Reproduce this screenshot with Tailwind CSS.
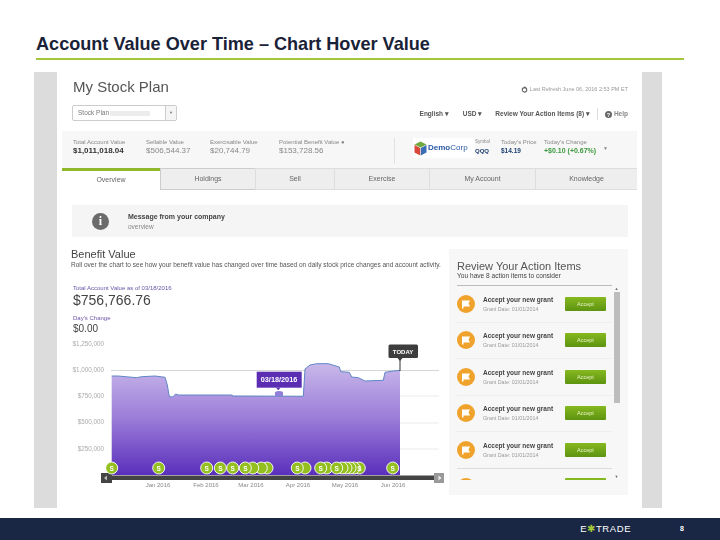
<!DOCTYPE html>
<html lang="en">
<head>
    <meta charset="UTF-8">
    <title>Account Value Over Time</title>
    <script src="https://cdn.jsdelivr.net/npm/@tailwindcss/browser@4"></script>
</head>
<body class="w-[720px] h-[540px] overflow-hidden bg-white font-['Liberation_Sans',Arial,sans-serif] flex flex-col">

    <!-- Slide title -->
    <header class="h-[72px] pl-[36px] pr-[36px] pt-[34px] shrink-0">
        <h1 class="text-[18.100px] leading-[20px] font-bold text-[#1a2238] h-[24px] whitespace-nowrap">Account Value Over Time – Chart Hover Value</h1>
        <div class="h-[2px] bg-[#a4c639]"></div>
    </header>

    <!-- Screenshot of the stock plan page -->
    <main class="ml-[34px] w-[628px] h-[436px] shrink-0 bg-[#dcdcdc] px-[23px] pr-[20px]">
        <div class="w-[585px] h-full bg-white overflow-hidden blur-[0.5px]">

            <div class="h-[33px] flex justify-between pl-[16px] pr-[14px] pt-[5px]">
                <h2 class="text-[15px] leading-[20px] text-[#555]">My Stock Plan</h2>
                <div class="flex items-center gap-[2px] h-[24px] text-[5.500px] text-[#999]">
                    <svg width="7" height="7" viewBox="0 0 10 10"><circle cx="5" cy="5.500" r="3.200" fill="none" stroke="#666" stroke-width="1.600"/><path d="M5 0l2.500 2.200L5 3.600z" fill="#666"/></svg>
                    <span>Last Refresh June 06, 2016 2:53 PM ET</span>
                </div>
            </div>

            <div class="h-[26px] flex justify-between items-start pl-[15px] pr-[14px]">
                <div class="w-[105px] h-[16px] border border-[#ccc] rounded-[2px] flex text-[6.500px] text-[#777] items-center">
                    <span class="pl-[5px] flex-1 flex items-center gap-[1px]">Stock Plan <span class="w-[40px] h-[5px] bg-[#ececec]"></span></span>
                    <span class="w-[11px] h-full border-l border-[#ccc] bg-[#f5f5f5] flex items-center justify-center text-[4px]">▼</span>
                </div>
                <div class="flex items-center text-[6.500px] text-[#555] h-[18px] font-bold">
                    <span class="mr-[14px]">English ▾</span>
                    <span class="mr-[13px]">USD ▾</span>
                    <span class="pr-[7px] border-r border-[#ddd] h-[12px] leading-[12px] mr-[7px]">Review Your Action Items (8) ▾</span>
                    <svg width="7" height="7" viewBox="0 0 10 10" class="mr-[2px]"><circle cx="5" cy="5" r="5" fill="#666"/><text x="5" y="8" font-size="8" fill="#fff" text-anchor="middle">?</text></svg>
                    <span class="text-[#888]">Help</span>
                </div>
            </div>

            <!-- Summary band -->
            <div class="ml-[5px] w-[575px] h-[37px] bg-[#f7f7f7] flex pl-[11px] pt-[7px] text-[#888]">
                <div class="w-[73px]"><p class="text-[6px] leading-[8px]">Total Account Value</p><p class="text-[8px] leading-[10px] font-bold text-[#333]">$1,011,018.04</p></div>
                <div class="w-[64px]"><p class="text-[6px] leading-[8px]">Sellable Value</p><p class="text-[8px] leading-[10px]">$506,544.37</p></div>
                <div class="w-[69px]"><p class="text-[6px] leading-[8px]">Exercisable Value</p><p class="text-[8px] leading-[10px]">$20,744.79</p></div>
                <div class="w-[116px] border-r border-[#e2e2e2] h-[26px]"><p class="text-[6px] leading-[8px] whitespace-nowrap">Potential Benefit Value ●</p><p class="text-[8px] leading-[10px]">$153,728.56</p></div>
                <div class="w-[18px]"></div>
                <div class="w-[62px] h-[20px] bg-white flex items-center gap-[1px] pl-[1px]">
                    <svg width="13" height="15" viewBox="0 0 13 15"><path d="M6.500 0.500L12.500 3.500L6.500 6.500L0.500 3.500z" fill="#6fa83c"/><path d="M0.500 4L6.200 7V14.500L0.500 11.500z" fill="#d9483b"/><path d="M12.500 4L6.800 7V14.500L12.500 11.500z" fill="#3a6fb5"/></svg>
                    <span class="text-[8px] font-bold text-[#2a5aa8]">Demo<span class="font-normal">Corp</span></span>
                </div>
                <div class="w-[26px]"><p class="text-[4.500px] leading-[8px]">Symbol</p><p class="text-[6px] leading-[10px] font-bold text-[#1d3f72]">QQQ</p></div>
                <div class="w-[43px]"><p class="text-[6px] leading-[8px]">Today's Price</p><p class="text-[6.500px] leading-[10px] font-bold text-[#1d3f72]">$14.19</p></div>
                <div class="w-[59px]"><p class="text-[6px] leading-[8px]">Today's Change</p><p class="text-[7px] leading-[10px] font-bold text-[#3c9a3c] whitespace-nowrap">+$0.10 (+0.67%)</p></div>
                <span class="text-[5px] leading-[20px]">▼</span>
            </div>

            <!-- Tabs -->
            <nav class="ml-[5px] w-[575px] h-[22px] flex text-[7px] text-[#666] text-center">
                <div class="w-[98px] border-t-[3px] border-[#8fb82b] leading-[17px] bg-white">Overview</div>
                <div class="w-[95px] border-t border-b border-l border-[#ccc] bg-[#eee] leading-[20px]">Holdings</div>
                <div class="w-[79px] border-t border-b border-l border-[#ddd] bg-[#eee] leading-[20px]">Sell</div>
                <div class="w-[95px] border-t border-b border-l border-[#ddd] bg-[#eee] leading-[20px]">Exercise</div>
                <div class="w-[106px] border-t border-b border-l border-[#ddd] bg-[#eee] leading-[20px]">My Account</div>
                <div class="w-[102px] border-t border-b border-l border-[#ddd] bg-[#eee] leading-[20px]">Knowledge</div>
            </nav>

            <!-- Company message -->
            <div class="ml-[15px] mt-[15px] w-[556px] h-[32px] bg-[#f5f5f5] flex items-center">
                <div class="ml-[20px] w-[17px] h-[17px] rounded-full bg-[#6b6b6b] text-white text-[12px] leading-[17px] text-center font-bold font-['Liberation_Serif',serif]">i</div>
                <div class="ml-[19px]">
                    <p class="text-[7px] leading-[11px] font-bold text-[#444]">Message from your company</p>
                    <p class="text-[6.500px] leading-[9px] text-[#888]">overview</p>
                </div>
            </div>

            <div class="flex mt-[12px]">
                <!-- Benefit value chart -->
                <section class="w-[392px] h-[246px] shrink-0">
                    <div class="pl-[14px]">
                        <h3 class="text-[11px] leading-[12px] text-[#444] mt-[-1px]">Benefit Value</h3>
                    </div>
                    <p class="pl-[14px] mt-[1px] text-[6.500px] leading-[8px] text-[#555] whitespace-nowrap w-[392px]">Roll over the chart to see how your benefit value has changed over time based on daily stock price changes and account activity.</p>
                    <div class="pl-[16px] pt-[16px]">
                        <p class="text-[6px] leading-[7px] text-[#6a55a8]">Total Account Value as of 03/18/2016</p>
                        <p class="text-[14px] leading-[17px] text-[#444]">$756,766.76</p>
                        <p class="text-[6px] leading-[8px] mt-[5px] text-[#6a55a8]">Day's Change</p>
                        <p class="text-[10px] leading-[12px] mt-[1px] text-[#444]">$0.00</p>
                    </div>
                    <svg class="block ml-[3px]" width="389" height="156" viewBox="60 335 389 156" font-family="Liberation Sans, sans-serif">
                        <defs>
                            <linearGradient id="area" x1="0" y1="0" x2="0" y2="1">
                                <stop offset="0" stop-color="#c9b8ea"/>
                                <stop offset="0.5" stop-color="#9a7bd8"/>
                                <stop offset="1" stop-color="#5a2fbc"/>
                            </linearGradient>
                        </defs>
                        <g stroke="#e6e6e6" stroke-width="0.800">
                            <line x1="111" y1="370.500" x2="439" y2="370.500" stroke="#ccc"/>
                            <line x1="111" y1="396" x2="439" y2="396"/>
                            <line x1="111" y1="423" x2="439" y2="423"/>
                            <line x1="111" y1="449" x2="439" y2="449"/>
                        </g>
                        <g font-size="6.300" fill="#aaa" text-anchor="end">
                            <text x="104" y="346">$1,250,000</text>
                            <text x="104" y="372">$1,000,000</text>
                            <text x="104" y="398">$750,000</text>
                            <text x="104" y="424">$500,000</text>
                            <text x="104" y="451">$250,000</text>
                        </g>
                        <path d="M111.700 376L118 376L136.700 377.700L141.700 376.700L155 376L165 377.300L167.300 385L169.300 396.700L172.700 397L175.700 394L178.300 395L231.700 395L233.300 396L303.300 396.300L305 369L310 365L316.700 363.700L328.300 363.700L339.300 367L340.700 371.700L349.300 372.300L351.700 377L358.300 377.700L365 381L383.300 380.300L385 372.300L393.300 371L400 370.300L400 475L111.700 475Z" fill="url(#area)"/>
                        <path d="M111.700 376L118 376L136.700 377.700L141.700 376.700L155 376L165 377.300L167.300 385L169.300 396.700L172.700 397L175.700 394L178.300 395L231.700 395L233.300 396L303.300 396.300L305 369L310 365L316.700 363.700L328.300 363.700L339.300 367L340.700 371.700L349.300 372.300L351.700 377L358.300 377.700L365 381L383.300 380.300L385 372.300L393.300 371L400 370.300" fill="none" stroke="#5f86c6" stroke-width="1"/>
                        <path d="M275 396V392Q279 390 283 392V396Z" fill="#8f7fd8"/>

                        <!-- hover and today flags -->
                        <rect x="256.700" y="371.700" width="45" height="16" fill="#5b2db3"/>
                        <path d="M276 387.700h4.500l-2.200 2.500z" fill="#5b2db3"/>
                        <text x="279" y="382" font-size="7.300" font-weight="bold" fill="#fff" text-anchor="middle">03/18/2016</text>
                        <line x1="400" y1="358" x2="400" y2="371" stroke="#333" stroke-width="1"/>
                        <rect x="388.500" y="344.500" width="29.500" height="13.500" rx="1.500" fill="#3d3d3d"/>
                        <path d="M397.500 358h5l-2.500 3z" fill="#3d3d3d"/>
                        <text x="403" y="353.500" font-size="6" font-weight="bold" fill="#fff" text-anchor="middle">TODAY</text>

                        <!-- scroller -->
                        <rect x="103" y="475.500" width="336" height="4.500" fill="#444"/>
                        <rect x="101" y="473" width="11" height="10" fill="#444"/>
                        <path d="M104 478l3-2.500v5z" fill="#bbb"/>
                        <rect x="434" y="473" width="10" height="10" fill="#999"/>
                        <path d="M441.500 478l-3-2.500v5z" fill="#eee"/>
                        <g font-size="6" fill="#888" text-anchor="middle">
                            <text x="158" y="486.500">Jan 2016</text>
                            <text x="206" y="486.500">Feb 2016</text>
                            <text x="251" y="486.500">Mar 2016</text>
                            <text x="298" y="486.500">Apr 2016</text>
                            <text x="345" y="486.500">May 2016</text>
                            <text x="393" y="486.500">Jun 2016</text>
                        </g>

                        <!-- dividend pins, right ones sit behind the left ones -->
                        <g stroke="#555" stroke-width="0.600">
                            <path d="M111.700 474v3M158.700 474v3M206.700 474v3M220.300 474v3M232.700 474v3M245.300 474v3M252.700 474v3M261.300 474v3M267 474v3M297.300 474v3M305 474v3M320.700 474v3M326.700 474v3M336.700 474v3M342 474v3M346 474v3M350 474v3M354 474v3M359.300 474v3M392.700 474v3"/>
                        </g>
                        <g stroke="#fff" stroke-width="0.900" fill="#93bf1f">
                            <circle cx="305" cy="468" r="6"/><circle cx="297.300" cy="468" r="6"/>
                            <circle cx="326.700" cy="468" r="6"/><circle cx="320.700" cy="468" r="6"/>
                            <circle cx="359.300" cy="468" r="6"/><circle cx="354" cy="468" r="6"/><circle cx="350" cy="468" r="6"/><circle cx="346" cy="468" r="6"/><circle cx="342" cy="468" r="6"/><circle cx="336.700" cy="468" r="6"/>
                            <circle cx="267" cy="468" r="6"/><circle cx="261.300" cy="468" r="6"/><circle cx="252.700" cy="468" r="6"/><circle cx="245.300" cy="468" r="6"/>
                            <circle cx="111.700" cy="468" r="6"/><circle cx="158.700" cy="468" r="6"/><circle cx="206.700" cy="468" r="6"/><circle cx="220.300" cy="468" r="6"/><circle cx="232.700" cy="468" r="6"/>
                            <circle cx="392.700" cy="468" r="6"/>
                        </g>
                        <g font-size="6.500" font-weight="bold" fill="#fff" text-anchor="middle">
                            <text x="111.700" y="470.500">S</text><text x="158.700" y="470.500">S</text><text x="206.700" y="470.500">S</text><text x="220.300" y="470.500">S</text><text x="232.700" y="470.500">S</text>
                            <text x="245.300" y="470.500">S</text><text x="297.300" y="470.500">S</text><text x="320.700" y="470.500">S</text><text x="336.700" y="470.500">S</text>
                            <text x="359.300" y="470.500">S</text><text x="392.700" y="470.500">S</text>
                        </g>
                    </svg>
                </section>

                <!-- Action items -->
                <aside class="w-[179px] h-[246px] bg-[#f7f7f7] pl-[8px] pt-[11px] shrink-0">
                    <h3 class="text-[11px] leading-[12px] text-[#555] whitespace-nowrap">Review Your Action Items</h3>
                    <p class="text-[6.600px] leading-[8px] text-[#444] mb-[5px]">You have 8 action items to consider</p>
                    <div class="flex h-[195px]">
                        <ul class="w-[155px] h-full overflow-hidden border-t border-[#bbb] shrink-0">
                            <li class="h-[36.500px] flex items-center border-b border-[#eee]">
                                <div class="w-[18px] h-[18px] rounded-full bg-[#f0a32c] flex items-center justify-center"><svg width="10" height="10" viewBox="0 0 10 10"><path d="M1 1.500H9L7.500 4.500L9 7.500H2.500V9.500H1Z" fill="#fff"/></svg></div>
                                <div class="ml-[8px] w-[82px]"><p class="text-[6.500px] leading-[10px] font-bold text-[#444]">Accept your new grant</p><p class="text-[5.300px] leading-[8px] text-[#999]">Grant Date: 01/01/2014</p></div>
                                <button class="w-[41px] h-[14px] rounded-[1px] bg-gradient-to-b from-[#86b81f] to-[#5d9410] text-[5.500px] text-[#e7f3c8]">Accept</button>
                            </li>
                            <li class="h-[36.500px] flex items-center border-b border-[#eee]">
                                <div class="w-[18px] h-[18px] rounded-full bg-[#f0a32c] flex items-center justify-center"><svg width="10" height="10" viewBox="0 0 10 10"><path d="M1 1.500H9L7.500 4.500L9 7.500H2.500V9.500H1Z" fill="#fff"/></svg></div>
                                <div class="ml-[8px] w-[82px]"><p class="text-[6.500px] leading-[10px] font-bold text-[#444]">Accept your new grant</p><p class="text-[5.300px] leading-[8px] text-[#999]">Grant Date: 01/01/2014</p></div>
                                <button class="w-[41px] h-[14px] rounded-[1px] bg-gradient-to-b from-[#86b81f] to-[#5d9410] text-[5.500px] text-[#e7f3c8]">Accept</button>
                            </li>
                            <li class="h-[36.500px] flex items-center border-b border-[#eee]">
                                <div class="w-[18px] h-[18px] rounded-full bg-[#f0a32c] flex items-center justify-center"><svg width="10" height="10" viewBox="0 0 10 10"><path d="M1 1.500H9L7.500 4.500L9 7.500H2.500V9.500H1Z" fill="#fff"/></svg></div>
                                <div class="ml-[8px] w-[82px]"><p class="text-[6.500px] leading-[10px] font-bold text-[#444]">Accept your new grant</p><p class="text-[5.300px] leading-[8px] text-[#999]">Grant Date: 02/01/2014</p></div>
                                <button class="w-[41px] h-[14px] rounded-[1px] bg-gradient-to-b from-[#86b81f] to-[#5d9410] text-[5.500px] text-[#e7f3c8]">Accept</button>
                            </li>
                            <li class="h-[36.500px] flex items-center border-b border-[#eee]">
                                <div class="w-[18px] h-[18px] rounded-full bg-[#f0a32c] flex items-center justify-center"><svg width="10" height="10" viewBox="0 0 10 10"><path d="M1 1.500H9L7.500 4.500L9 7.500H2.500V9.500H1Z" fill="#fff"/></svg></div>
                                <div class="ml-[8px] w-[82px]"><p class="text-[6.500px] leading-[10px] font-bold text-[#444]">Accept your new grant</p><p class="text-[5.300px] leading-[8px] text-[#999]">Grant Date: 01/01/2014</p></div>
                                <button class="w-[41px] h-[14px] rounded-[1px] bg-gradient-to-b from-[#86b81f] to-[#5d9410] text-[5.500px] text-[#e7f3c8]">Accept</button>
                            </li>
                            <li class="h-[36.500px] flex items-center border-b border-[#ddd]">
                                <div class="w-[18px] h-[18px] rounded-full bg-[#f0a32c] flex items-center justify-center"><svg width="10" height="10" viewBox="0 0 10 10"><path d="M1 1.500H9L7.500 4.500L9 7.500H2.500V9.500H1Z" fill="#fff"/></svg></div>
                                <div class="ml-[8px] w-[82px]"><p class="text-[6.500px] leading-[10px] font-bold text-[#444]">Accept your new grant</p><p class="text-[5.300px] leading-[8px] text-[#999]">Grant Date: 01/01/2014</p></div>
                                <button class="w-[41px] h-[14px] rounded-[1px] bg-gradient-to-b from-[#86b81f] to-[#5d9410] text-[5.500px] text-[#e7f3c8]">Accept</button>
                            </li>
                            <!-- last row is cut by the scroll box, only its top edge shows -->
                            <li class="h-[36.500px] flex items-start pt-[9px]">
                                <div class="w-[18px] h-[18px] rounded-full bg-[#f0a32c]"></div>
                                <div class="ml-[8px] w-[82px]"></div>
                                <div class="w-[41px] h-[14px] rounded-[1px] bg-[#86b81f]"></div>
                            </li>
                        </ul>
                        <div class="w-[7px] ml-[1px] flex flex-col items-center text-[#666] text-[4px] leading-[7px]">
                            <span>▲</span>
                            <div class="w-[6px] h-[111px] bg-[#bdbdbd]"></div>
                            <span class="mt-auto">▼</span>
                        </div>
                    </div>
                </aside>
            </div>
        </div>
    </main>

    <!-- Slide footer -->
    <footer class="mt-[10px] h-[22px] bg-[#1a2744] flex items-center justify-end shrink-0">
        <span class="text-[9.500px] tracking-[0.6px] text-white">E<span class="text-[#a4c639]">✱</span>TRADE</span>
        <span class="ml-[49px] mr-[36px] text-[7px] font-bold text-white">8</span>
    </footer>
</body>
</html>
